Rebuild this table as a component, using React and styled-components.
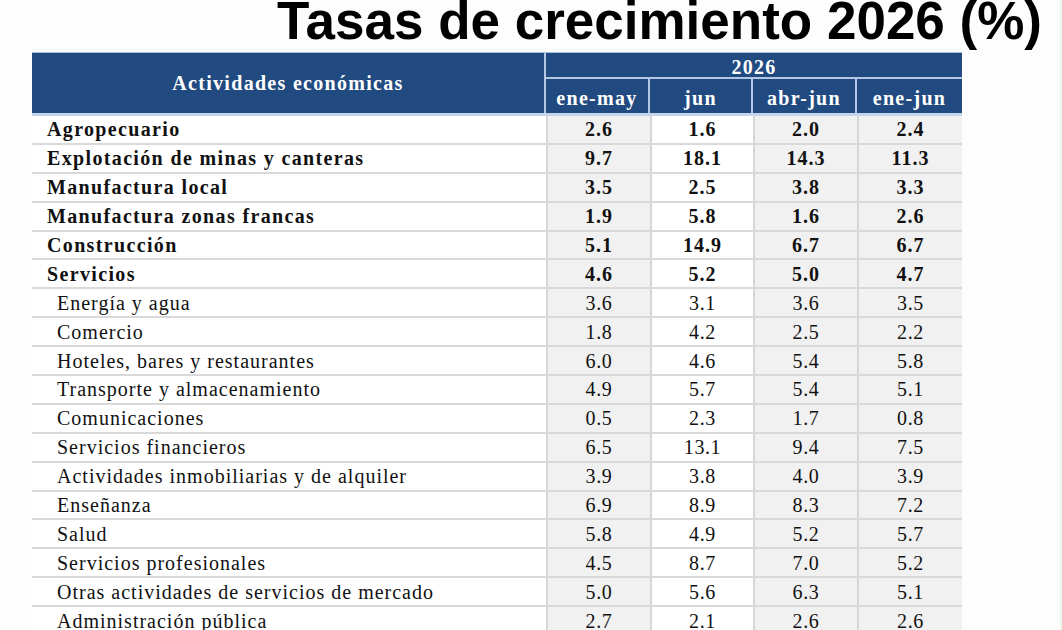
import React from "react";
import styled, { createGlobalStyle } from "styled-components";

const GlobalStyle = createGlobalStyle`
  html, body {
    margin: 0;
    padding: 0;
    background: #fdfdfd;
  }
  body {
    font-family: "Liberation Serif", "Times New Roman", serif;
    color: #111;
    overflow: hidden;
  }
`;

const Page = styled.div`
  width: 1062px;
  height: 630px;
  box-sizing: border-box;
  border-right: 2px solid #eaf8ea;
  overflow: hidden;
`;

const Title = styled.h1`
  margin: -5px 0 5px 0;
  padding-right: 18px;
  text-align: right;
  font-family: "Liberation Sans", Arial, sans-serif;
  font-weight: 700;
  font-size: 53px;
  line-height: 52px;
  color: #000;
`;

const Table = styled.div`
  margin-left: 32px;
  width: 930px;
`;

const Head = styled.div`
  display: grid;
  grid-template-columns: 514px 104px 103px 104px 105px;
  grid-template-rows: 26px 34px;
  background: #214a80;
  border-top: 1px solid #a9c0dd;
  border-bottom: 3px solid #c4d5ea;
`;

const HeadCell = styled.div`
  display: flex;
  align-items: center;
  justify-content: center;
  padding-top: ${(p) => (p.$low ? "5px" : "0")};
  box-sizing: border-box;
  color: #fff;
  font-weight: 700;
  font-size: 20px;
  letter-spacing: 1.3px;
  grid-row: ${(p) => p.$row || "auto"};
  grid-column: ${(p) => p.$col || "auto"};
  border-right: ${(p) => (p.$sep ? "2px solid #b4c8e3" : "none")};
  border-bottom: ${(p) => (p.$under ? "2px solid #b4c8e3" : "none")};
`;

const Row = styled.div`
  display: grid;
  grid-template-columns: 514px 104px 103px 104px 105px;
  height: 28.9px;
  box-sizing: border-box;
  border-bottom: 2px solid #d9d9d9;
`;

const Label = styled.div`
  display: flex;
  align-items: center;
  background: #fff;
  padding-left: ${(p) => (p.$sub ? "25px" : "15px")};
  padding-top: 1px;
  font-size: 20px;
  font-weight: ${(p) => (p.$bold ? 700 : 400)};
  letter-spacing: ${(p) => (p.$bold ? "1.35px" : "1px")};
  white-space: nowrap;
`;

const Num = styled.div`
  display: flex;
  align-items: center;
  justify-content: center;
  padding-top: 1px;
  background: ${(p) => (p.$plain ? "#fff" : "#f1f1f1")};
  border-left: 2px solid #d6d6d6;
  font-size: 20px;
  font-weight: ${(p) => (p.$bold ? 700 : 400)};
  letter-spacing: ${(p) => (p.$bold ? "1px" : "0.6px")};
`;

const periods = ["ene-may", "jun", "abr-jun", "ene-jun"];

const rows = [
  { name: "Agropecuario", bold: true, v: ["2.6", "1.6", "2.0", "2.4"] },
  { name: "Explotación de minas y canteras", bold: true, v: ["9.7", "18.1", "14.3", "11.3"] },
  { name: "Manufactura local", bold: true, v: ["3.5", "2.5", "3.8", "3.3"] },
  { name: "Manufactura zonas francas", bold: true, v: ["1.9", "5.8", "1.6", "2.6"] },
  { name: "Construcción", bold: true, v: ["5.1", "14.9", "6.7", "6.7"] },
  { name: "Servicios", bold: true, v: ["4.6", "5.2", "5.0", "4.7"] },
  { name: "Energía y agua", v: ["3.6", "3.1", "3.6", "3.5"] },
  { name: "Comercio", v: ["1.8", "4.2", "2.5", "2.2"] },
  { name: "Hoteles, bares y restaurantes", v: ["6.0", "4.6", "5.4", "5.8"] },
  { name: "Transporte y almacenamiento", v: ["4.9", "5.7", "5.4", "5.1"] },
  { name: "Comunicaciones", v: ["0.5", "2.3", "1.7", "0.8"] },
  { name: "Servicios financieros", v: ["6.5", "13.1", "9.4", "7.5"] },
  { name: "Actividades inmobiliarias y de alquiler", v: ["3.9", "3.8", "4.0", "3.9"] },
  { name: "Enseñanza", v: ["6.9", "8.9", "8.3", "7.2"] },
  { name: "Salud", v: ["5.8", "4.9", "5.2", "5.7"] },
  { name: "Servicios profesionales", v: ["4.5", "8.7", "7.0", "5.2"] },
  { name: "Otras actividades de servicios de mercado", v: ["5.0", "5.6", "6.3", "5.1"] },
  { name: "Administración pública", v: ["2.7", "2.1", "2.6", "2.6"] },
];

export default function App() {
  return (
    <Page>
      <GlobalStyle />
      <Title>Tasas de crecimiento 2026 (%)</Title>
      <Table>
        <Head>
          <HeadCell $row="1 / 3" $col="1" $sep>
            Actividades económicas
          </HeadCell>
          <HeadCell $row="1" $col="2 / 6" $under $low>
            2026
          </HeadCell>
          {periods.map((p, i) => (
            <HeadCell key={p} $row="2" $low $sep={i < periods.length - 1}>
              {p}
            </HeadCell>
          ))}
        </Head>
        {rows.map((r) => (
          <Row key={r.name}>
            <Label $bold={r.bold} $sub={!r.bold}>
              {r.name}
            </Label>
            {r.v.map((n, i) => (
              <Num key={i} $bold={r.bold} $plain={i === 1}>
                {n}
              </Num>
            ))}
          </Row>
        ))}
      </Table>
    </Page>
  );
}
